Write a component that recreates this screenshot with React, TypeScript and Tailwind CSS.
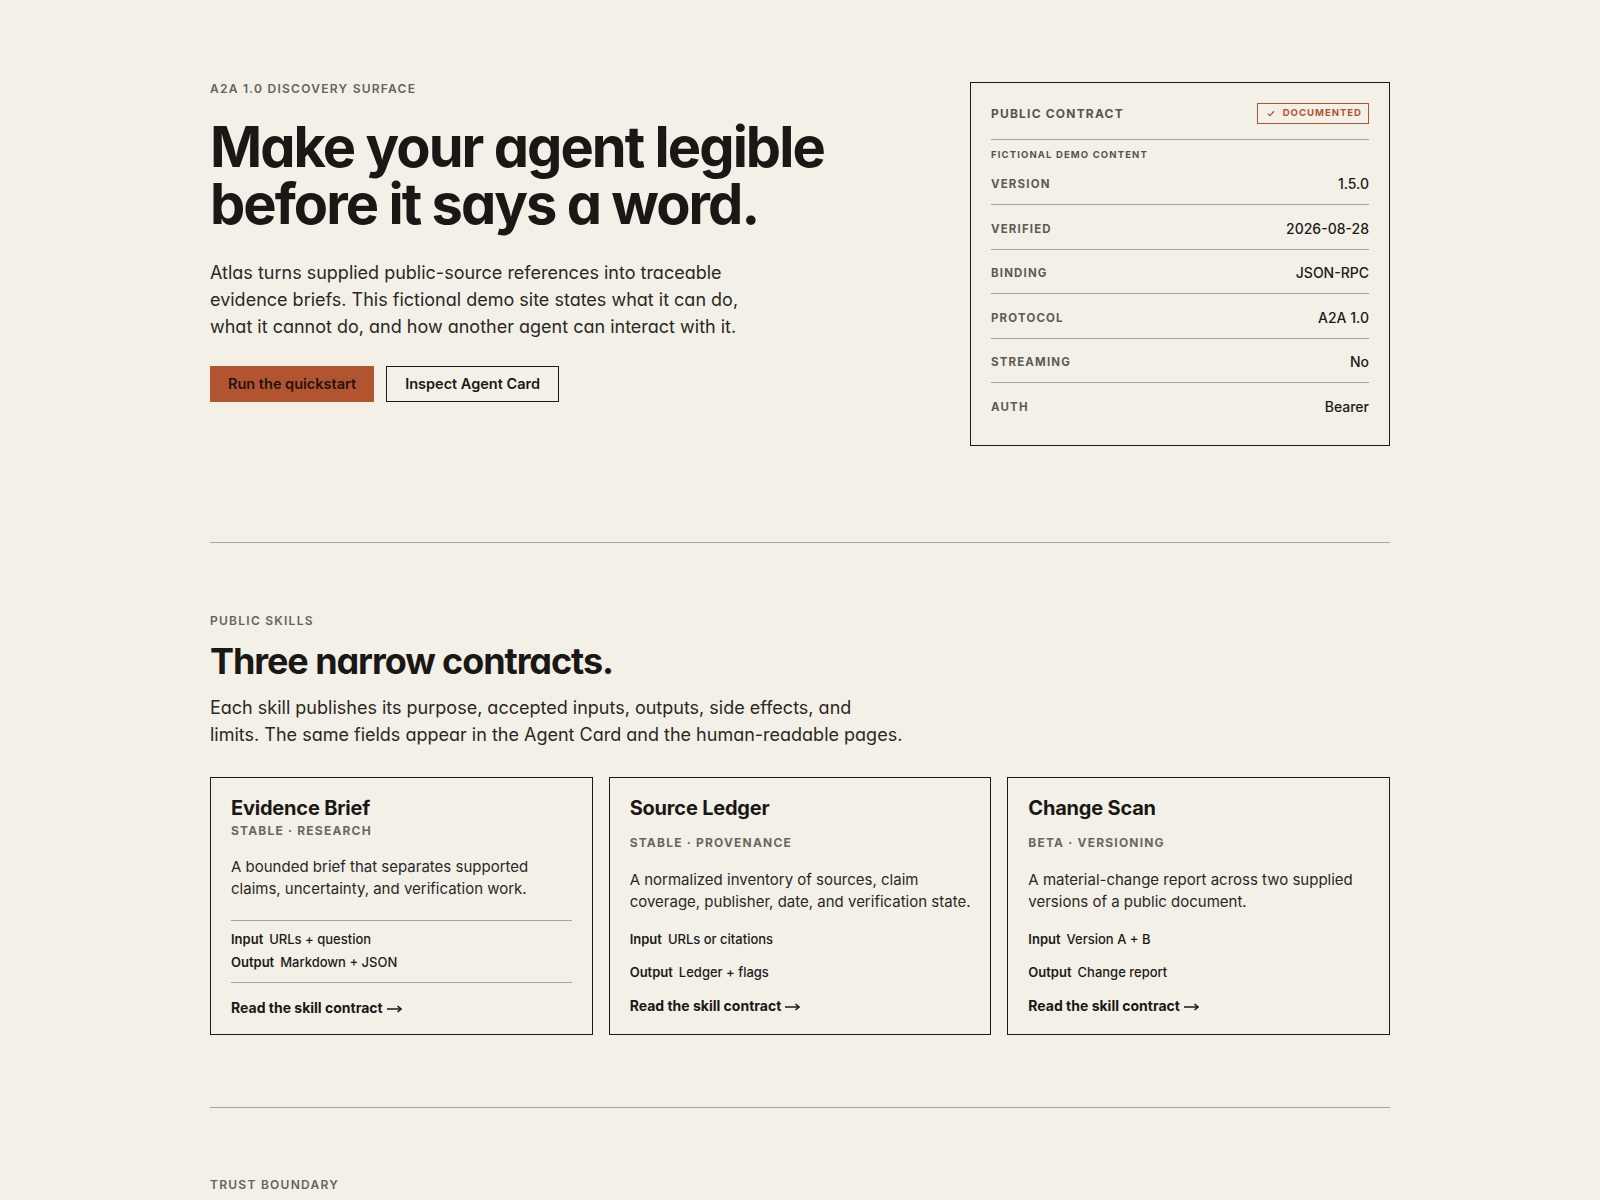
import React from "react";

const Eyebrow = ({ children, className = "" }: { children: React.ReactNode; className?: string }) => (
  <p className={`text-[12px] leading-[14px] font-semibold tracking-[0.105em] uppercase text-[#66625a] ${className}`}>{children}</p>
);

const rows: [string, string][] = [
  ["Version", "1.5.0"],
  ["Verified", "2026-08-28"],
  ["Binding", "JSON-RPC"],
  ["Protocol", "A2A 1.0"],
  ["Streaming", "No"],
  ["Auth", "Bearer"],
];

function ContractCard() {
  return (
    <aside className="self-start border border-[#1c1a17] px-5 pt-5 pb-[18.5px]">
      <div className="flex items-center justify-between border-b border-[#aaa59c] pb-[15px]">
        <span className="text-[12px] leading-[14px] font-bold tracking-[0.1em] text-[#58544d]">PUBLIC CONTRACT</span>
        <span className="flex h-[21px] items-center gap-2 border border-[#b5532f] pl-[9px] pr-[6px] text-[9.6px] font-bold tracking-[0.1em] text-[#b5532f]">
          <svg width="8" height="7" viewBox="0 0 8 7" fill="none" stroke="#b5532f" strokeWidth="1.3">
            <path d="M1 3.8 L3 5.6 L7 1.2" />
          </svg>
          DOCUMENTED
        </span>
      </div>
      <p className="mt-[8px] text-[9.5px] leading-[14px] font-bold tracking-[0.12em] text-[#58544d]">FICTIONAL DEMO CONTENT</p>
      <dl>
        {rows.map(([k, v], i) => (
          <div
            key={k}
            className={`flex items-center justify-between pb-[10px] ${i === 0 ? "pt-3" : "pt-[13.5px]"} ${i < rows.length - 1 ? "border-b border-[#aaa59c]" : ""}`}
          >
            <dt className="text-[11.5px] leading-5 font-bold tracking-[0.1em] uppercase text-[#5f5b53]">{k}</dt>
            <dd className="text-[14px] leading-5 font-medium text-[#1c1a17]">{v}</dd>
          </div>
        ))}
      </dl>
    </aside>
  );
}

type Skill = {
  title: string;
  meta: string;
  desc: React.ReactNode;
  input: string;
  output: string;
};

const skills: Skill[] = [
  {
    title: "Evidence Brief",
    meta: "Stable · Research",
    desc: (
      <>
        A bounded brief that separates supported
        <br />
        claims, uncertainty, and verification work.
      </>
    ),
    input: "URLs + question",
    output: "Markdown + JSON",
  },
  {
    title: "Source Ledger",
    meta: "Stable · Provenance",
    desc: (
      <>
        A normalized inventory of sources, claim
        <br />
        coverage, publisher, date, and verification state.
      </>
    ),
    input: "URLs or citations",
    output: "Ledger + flags",
  },
  {
    title: "Change Scan",
    meta: "Beta · Versioning",
    desc: (
      <>
        A material-change report across two supplied
        <br />
        versions of a public document.
      </>
    ),
    input: "Version A + B",
    output: "Change report",
  },
];

const Meta = ({ children, className = "" }: { children: React.ReactNode; className?: string }) => (
  <p className={`text-[12px] leading-4 font-bold tracking-[0.1em] uppercase text-[#6b675f] ${className}`}>{children}</p>
);

const Title = ({ children }: { children: React.ReactNode }) => (
  <h3 className="text-[20px] leading-[28px] font-bold tracking-[-0.01em] text-[#1a1815]">{children}</h3>
);

const Desc = ({ children, className = "" }: { children: React.ReactNode; className?: string }) => (
  <p className={`text-[15px] leading-[22px] text-[#2a2824] whitespace-nowrap ${className}`}>{children}</p>
);

const IO = ({ label, value, className = "" }: { label: string; value: string; className?: string }) => (
  <p className={`text-[13px] font-semibold text-[#1c1a17] ${className}`}>
    <span className="mr-[6px]">{label}</span>
    <span className="font-medium">{value}</span>
  </p>
);

const Link = ({ className = "" }: { className?: string }) => (
  <a className={`flex items-center gap-[4px] text-[14px] leading-5 font-bold text-[#1a1815] ${className}`}>
    Read the skill contract
    <svg width="15" height="8" viewBox="0 0 15 8" fill="none" stroke="#1a1815" strokeWidth="1.5" className="mt-[1px]">
      <path d="M0 4 H14" />
      <path d="M10.5 1 L14 4 L10.5 7" />
    </svg>
  </a>
);

function SkillCard({ s, featured }: { s: Skill; featured: boolean }) {
  if (featured) {
    return (
      <div className="border border-[#1c1a17] px-5 pt-4 pb-4">
        <Title>{s.title}</Title>
        <Meta className="mt-[1px]">{s.meta}</Meta>
        <Desc className="mt-[17px]">{s.desc}</Desc>
        <div className="mt-5 border-y border-[#aaa59c] pt-[7px] pb-2">
          <IO label="Input" value={s.input} className="leading-[23px]" />
          <IO label="Output" value={s.output} className="leading-[23px]" />
        </div>
        <Link className="mt-[15px]" />
      </div>
    );
  }
  return (
    <div className="border border-[#1c1a17] px-5 pt-4 pb-4">
      <Title>{s.title}</Title>
      <Meta className="mt-[13px]">{s.meta}</Meta>
      <Desc className="mt-[18px]">{s.desc}</Desc>
      <IO label="Input" value={s.input} className="mt-4 leading-5" />
      <IO label="Output" value={s.output} className="mt-[13px] leading-5" />
      <Link className="mt-[14px]" />
    </div>
  );
}

export default function App() {
  return (
    <div className="min-h-screen bg-[#f3f0e8] text-[#1a1815] font-['Inter','Noto_Sans',sans-serif]">
      <div className="mx-auto w-[1180px]">
        <section className="grid grid-cols-[1fr_420px] gap-10 pt-[82px]">
          <div>
            <Eyebrow>A2A 1.0 Discovery Surface</Eyebrow>
            <h1 className="mt-[23px] text-[56px] leading-[57px] font-bold tracking-[-0.035em] [font-feature-settings:'cv11']">
              Make your agent legible
              <br />
              before it says a word.
            </h1>
            <p className="mt-[26px] text-[18px] leading-[27px] text-[#2a2824] whitespace-nowrap [font-feature-settings:'cv11']">
              Atlas turns supplied public-source references into traceable
              <br />
              evidence briefs. This fictional demo site states what it can do,
              <br />
              what it cannot do, and how another agent can interact with it.
            </p>
            <div className="mt-[26px] flex gap-3">
              <a className="flex h-9 items-center bg-[#b35431] px-[18px] text-[14.5px] font-semibold text-[#1f140e]">
                Run the quickstart
              </a>
              <a className="flex h-9 items-center border border-[#1c1a17] px-[18px] text-[14.5px] font-semibold text-[#1a1815]">
                Inspect Agent Card
              </a>
            </div>
          </div>
          <ContractCard />
        </section>

        <div className="mt-24 h-px bg-[#aaa59c]" />

        <section className="pt-[71px]">
          <Eyebrow>Public Skills</Eyebrow>
          <h2 className="mt-[13px] text-[36px] leading-[40px] font-bold tracking-[-0.03em] [font-feature-settings:'cv11']">
            Three narrow contracts.
          </h2>
          <p className="mt-[13px] text-[18px] leading-[27px] text-[#2a2824] whitespace-nowrap [font-feature-settings:'cv11']">
            Each skill publishes its purpose, accepted inputs, outputs, side effects, and
            <br />
            limits. The same fields appear in the Agent Card and the human-readable pages.
          </p>
          <div className="mt-[29px] grid grid-cols-3 gap-4">
            {skills.map((s, i) => (
              <SkillCard key={s.title} s={s} featured={i === 0} />
            ))}
          </div>
        </section>

        <div className="mt-[72px] h-px bg-[#aaa59c]" />

        <section className="pt-[70px] pb-20">
          <Eyebrow>Trust Boundary</Eyebrow>
        </section>
      </div>
    </div>
  );
}
